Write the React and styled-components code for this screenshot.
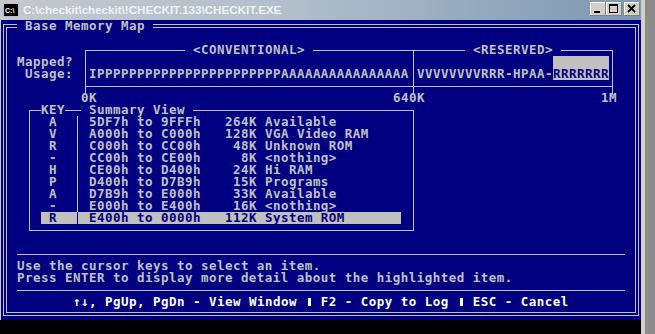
import React from "react";
import styled, { createGlobalStyle, css } from "styled-components";

const colors = {
  blue: "#000080",
  gray: "#c0c0c0",
  white: "#ffffff",
  face: "#d4d0c8",
  desk: "#8c8c8c",
  black: "#000000",
};

const GlobalStyle = createGlobalStyle`
  html, body {
    margin: 0;
    padding: 0;
    background: ${colors.desk};
    overflow: hidden;
  }
`;

// text-mode cell placement: col/row are 0-based screen coordinates
const place = (p) => css`
  grid-column: ${p.$col + 1} / span ${p.$span || 1};
  grid-row: ${p.$row + 1} / span ${p.$rows || 1};
`;

const Page = styled.div`
  display: flex;
  width: 655px;
  height: 334px;
`;

const Window = styled.div`
  display: grid;
  grid-template-columns: 1px 640px 4px;
  grid-template-rows: 20px 300px 1fr;
  width: 645px;
  height: 334px;
`;

const TitleBar = styled.div`
  grid-column: 1 / 3;
  grid-row: 1;
  display: flex;
  align-items: flex-start;
  padding: 2px 1px 0 3px;
  background: linear-gradient(90deg, #c3c8cd 0%, #b2bfcb 45%, #7d97b2 100%);
  font-family: "Liberation Sans", Arial, sans-serif;
  font-weight: bold;
  font-size: 11.6px;
  color: #eef1f4;
`;

const AppIcon = styled.svg`
  width: 16px;
  height: 14px;
  margin-top: 1px;
  flex: none;
`;

const Caption = styled.span`
  margin-left: 4px;
  line-height: 15px;
  white-space: pre;
`;

const Buttons = styled.div`
  display: flex;
  margin-left: auto;
`;

const CapButton = styled.div`
  width: 16px;
  height: 14px;
  margin-left: ${(p) => (p.$gap ? "2px" : "0")};
  background: ${colors.face};
  box-shadow: inset -1px -1px #808080, inset 1px 1px #ffffff;
  display: flex;
  align-items: center;
  justify-content: center;
`;

const Edge = styled.div`
  grid-column: ${(p) => p.$col};
  grid-row: ${(p) => p.$rows};
  background: ${(p) => p.$tone};
`;

const BottomBlack = styled.div`
  grid-column: 1 / 3;
  grid-row: 3;
  background: ${colors.black};
`;

const Screen = styled.div`
  grid-column: 2;
  grid-row: 2;
  display: grid;
  grid-template-columns: repeat(80, 8px);
  grid-template-rows: repeat(25, 12px);
  background: ${colors.blue};
  color: ${colors.gray};
  font-family: "DejaVu Sans Mono", "Liberation Mono", monospace;
  font-weight: bold;
  font-size: 12.5px;
  line-height: 12px;
  letter-spacing: 0.47px;
`;

const DoubleFrame = styled.div`
  grid-column: 1 / -1;
  grid-row: 1 / -1;
  margin: 4px 2px;
  border: 1px solid ${colors.gray};
  box-shadow: inset 0 0 0 2px ${colors.blue}, inset 0 0 0 3px ${colors.gray};
`;

const Text = styled.div`
  ${place};
  justify-self: start;
  width: max-content;
  white-space: pre;
  color: ${(p) => (p.$bright ? colors.white : p.$ink ? colors.blue : "inherit")};
  background: ${(p) => (p.$cover ? colors.blue : "transparent")};
`;

const BarBox = styled.div`
  ${place};
  margin: 6px 4px 5px 4px;
  border-top: 1px solid ${colors.gray};
  border-bottom: 1px solid ${colors.gray};
`;

const VRule = styled.div`
  ${place};
  align-self: start;
  width: 1px;
  height: ${(p) => p.$len}px;
  margin-top: 6px;
  margin-left: ${(p) => p.$off}px;
  background: ${colors.gray};
`;

const Shade = styled.div`
  ${place};
  background: ${colors.gray};
`;

const Box = styled.div`
  ${place};
  margin: 6px 3px 5px 4px;
  border: 1px solid ${colors.gray};
`;

const HRule = styled.div`
  ${place};
  align-self: start;
  height: 1px;
  margin-top: 6px;
  background: ${colors.gray};
`;

const ListRow = styled.div`
  ${place};
  display: flex;
  white-space: pre;
  color: ${(p) => (p.$hi ? colors.blue : colors.gray)};
  background: ${(p) => (p.$hi ? colors.gray : "transparent")};
`;

const KeyCell = styled.span`
  width: 32px;
  padding-left: 8px;
  box-sizing: border-box;
  flex: none;
`;

const Sep = styled.span`
  width: 8px;
  margin-right: 8px;
  flex: none;
  background: linear-gradient(currentColor, currentColor) 4px 0 / 1px 100% no-repeat;
`;

const Block = styled.span`
  display: inline-block;
  width: 3px;
  height: 8px;
  margin: 0 2px 0 3px;
  background: ${colors.white};
  vertical-align: 0;
`;

const entries = [
  ["A", "5DF7h", "9FFFh", "264K", "Available"],
  ["V", "A000h", "C000h", "128K", "VGA Video RAM"],
  ["R", "C000h", "CC00h", "48K", "Unknown ROM"],
  ["-", "CC00h", "CE00h", "8K", "<nothing>"],
  ["H", "CE00h", "D400h", "24K", "Hi RAM"],
  ["P", "D400h", "D7B9h", "15K", "Programs"],
  ["A", "D7B9h", "E000h", "33K", "Available"],
  ["-", "E000h", "E400h", "16K", "<nothing>"],
  ["R", "E400h", "0000h", "112K", "System ROM"],
];

const conventional = "I" + "P".repeat(23) + "A".repeat(16);

function App() {
  return (
    <Page>
      <GlobalStyle />
      <Window>
        <TitleBar>
          <AppIcon viewBox="0 0 16 14">
            <rect x="0" y="0" width="16" height="14" fill="#c0c0c0" />
            <rect x="1" y="1" width="14" height="12" fill="#000" />
            <text x="2" y="9.5" fontSize="7" fontFamily="Liberation Sans, sans-serif" fontWeight="bold" fill="#fff">
              C:\
            </text>
          </AppIcon>
          <Caption>C:\checkit\checkit\!CHECKIT.133\CHECKIT.EXE</Caption>
          <Buttons>
            <CapButton>
              <svg width="16" height="14" viewBox="0 0 16 14">
                <rect x="4" y="9" width="6" height="2" fill="#000" />
              </svg>
            </CapButton>
            <CapButton>
              <svg width="16" height="14" viewBox="0 0 16 14">
                <rect x="3.5" y="2.5" width="8" height="8" fill="none" stroke="#000" />
                <rect x="3" y="2" width="9" height="2" fill="#000" />
              </svg>
            </CapButton>
            <CapButton $gap>
              <svg width="16" height="14" viewBox="0 0 16 14">
                <path d="M4 3 L11 10 M11 3 L4 10" stroke="#000" strokeWidth="1.8" />
              </svg>
            </CapButton>
          </Buttons>
        </TitleBar>
        <Edge $col="1" $rows="2" $tone="#c8c8c8" />
        <Edge $col="3" $rows="1 / 4" $tone={colors.face} />
        <Screen>
          <DoubleFrame />
          <Text $row={0} $col={2} $cover> Base Memory Map </Text>

          <BarBox $row={2} $col={10} $span={67} $rows={4} />
          <VRule $row={2} $col={10} $len={45} $off={4} />
          <VRule $row={2} $col={51} $len={45} $off={4} />
          <VRule $row={2} $col={76} $len={45} $off={3} />
          <Text $row={2} $col={23} $cover> {"<CONVENTIONAL>"} </Text>
          <Text $row={2} $col={58} $cover> {"<RESERVED>"} </Text>
          <Text $row={3} $col={2}>Mapped?</Text>
          <Text $row={4} $col={3}>Usage:</Text>
          <Text $row={4} $col={11}>{conventional}</Text>
          <Text $row={4} $col={52}>VVVVVVVVRRR-HPAA-</Text>
          <Shade $row={3} $col={69} $span={7} $rows={2} />
          <Text $row={4} $col={69} $ink>RRRRRRR</Text>
          <Text $row={6} $col={10}>0K</Text>
          <Text $row={6} $col={49}>640K</Text>
          <Text $row={6} $col={75}>1M</Text>

          <Box $row={7} $col={3} $span={49} $rows={11} />
          <Text $row={7} $col={5} $cover>KEY</Text>
          <Text $row={7} $col={10} $cover> Summary View </Text>
          {entries.map(([key, from, to, size, desc], i) => (
            <ListRow key={i} $row={8 + i} $col={5} $span={45} $hi={i === entries.length - 1}>
              <KeyCell>{key}</KeyCell>
              <Sep />
              <span>{`${from} to ${to}   ${size.padStart(4)} ${desc}`}</span>
            </ListRow>
          ))}

          <HRule $row={19} $col={2} $span={76} />
          <Text $row={20} $col={2}>Use the cursor keys to select an item.</Text>
          <Text $row={21} $col={2}>Press ENTER to display more detail about the highlighted item.</Text>
          <HRule $row={22} $col={2} $span={76} />
          <Text $row={23} $col={9} $bright>
            ↑↓, PgUp, PgDn - View Window <Block /> F2 - Copy to Log <Block /> ESC - Cancel
          </Text>
        </Screen>
        <BottomBlack />
      </Window>
    </Page>
  );
}

export default App;
